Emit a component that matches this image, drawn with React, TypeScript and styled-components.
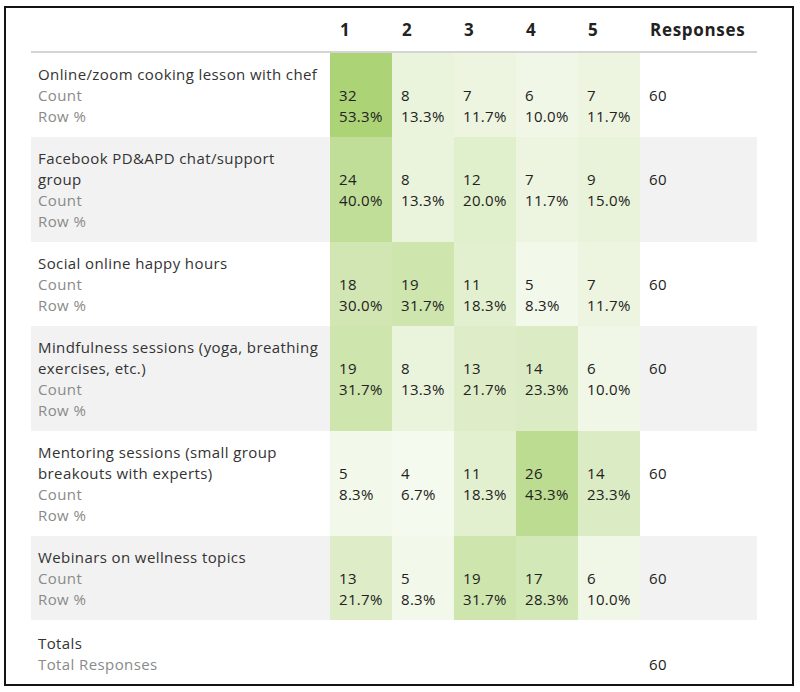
import React from "react";
import styled, { createGlobalStyle } from "styled-components";

type Row = {
  label: string[];
  counts: number[];
  total: number;
};

const rows: Row[] = [
  { label: ["Online/zoom cooking lesson with chef"], counts: [32, 8, 7, 6, 7], total: 60 },
  { label: ["Facebook PD&APD chat/support", "group"], counts: [24, 8, 12, 7, 9], total: 60 },
  { label: ["Social online happy hours"], counts: [18, 19, 11, 5, 7], total: 60 },
  { label: ["Mindfulness sessions (yoga, breathing", "exercises, etc.)"], counts: [19, 8, 13, 14, 6], total: 60 },
  { label: ["Mentoring sessions (small group", "breakouts with experts)"], counts: [5, 4, 11, 26, 14], total: 60 },
  { label: ["Webinars on wellness topics"], counts: [13, 5, 19, 17, 6], total: 60 },
];

// white -> green, full green at ~55%
const heat = (pct: number) => {
  const t = Math.min(pct / 55, 1);
  const r = Math.round(255 - 85 * t);
  const g = Math.round(255 - 45 * t);
  const b = Math.round(255 - 140 * t);
  return `rgb(${r}, ${g}, ${b})`;
};

const App = () => {
  return (
    <>
      <GlobalStyle />
      <Frame>
        <Table>
          <colgroup>
            <col style={{ width: 299 }} />
            {[1, 2, 3, 4, 5].map((n) => (
              <col key={n} style={{ width: 62 }} />
            ))}
            <col style={{ width: 117 }} />
          </colgroup>
          <thead>
            <tr>
              <HeadCell />
              {[1, 2, 3, 4, 5].map((n) => (
                <HeadCell key={n}>{n}</HeadCell>
              ))}
              <HeadCell>Responses</HeadCell>
            </tr>
          </thead>
          <tbody>
            {rows.map((row, i) => (
              <BodyRow key={i} $shaded={i % 2 === 1}>
                <LabelCell>
                  {row.label.map((l, j) => (
                    <Line key={j}>{l}</Line>
                  ))}
                  <SubLine>Count</SubLine>
                  <SubLine>Row %</SubLine>
                </LabelCell>
                {row.counts.map((c, j) => {
                  const pct = (c / row.total) * 100;
                  return (
                    <ValueCell key={j} style={{ background: heat(pct) }}>
                      <Line>{c}</Line>
                      <Line>{pct.toFixed(1)}%</Line>
                    </ValueCell>
                  );
                })}
                <ValueCell>
                  <Line>{row.total}</Line>
                </ValueCell>
              </BodyRow>
            ))}
            <TotalsRow>
              <LabelCell>
                <Line>Totals</Line>
                <SubLine>Total Responses</SubLine>
              </LabelCell>
              <td colSpan={5} />
              <ValueCell>
                <Line>60</Line>
              </ValueCell>
            </TotalsRow>
          </tbody>
        </Table>
      </Frame>
    </>
  );
};

export default App;

const GlobalStyle = createGlobalStyle`
  body {
    margin: 0;
    background: #ffffff;
    font-family: "Open Sans", "Lato", sans-serif;
  }
`;

const Frame = styled.div`
  box-sizing: border-box;
  width: 790px;
  height: 680px;
  margin: 6px 0 0 4px;
  border: 2px solid #141414;
  padding: 0 0 0 25px;
  overflow: hidden;
`;

const Table = styled.table`
  border-collapse: collapse;
  table-layout: fixed;
  width: 726px;
`;

const HeadCell = styled.th`
  height: 43px;
  padding: 0 0 0 10px;
  text-align: left;
  vertical-align: middle;
  font-size: 17px;
  font-weight: 700;
  letter-spacing: 0.7px;
  color: #222222;
  border-bottom: 2px solid #d4d4d4;
`;

const BodyRow = styled.tr<{ $shaded: boolean }>`
  background: ${(p) => (p.$shaded ? "#f2f2f2" : "#ffffff")};
`;

const TotalsRow = styled.tr`
  background: #ffffff;

  td {
    padding-top: 13px;
    padding-bottom: 6px;
  }
`;

const LabelCell = styled.td`
  padding: 11px 0 10px 7px;
  vertical-align: top;
  font-size: 15px;
  line-height: 21px;
  letter-spacing: 0.4px;
  color: #333333;
`;

const ValueCell = styled.td`
  padding: 32px 0 10px 9px;
  vertical-align: top;
  font-size: 15px;
  line-height: 21px;
  letter-spacing: 0.3px;
  color: #222222;

  ${TotalsRow} & {
    padding-top: 34px;
  }
`;

const Line = styled.div`
  white-space: nowrap;
`;

const SubLine = styled.div`
  white-space: nowrap;
  color: #8a8a8a;
`;
